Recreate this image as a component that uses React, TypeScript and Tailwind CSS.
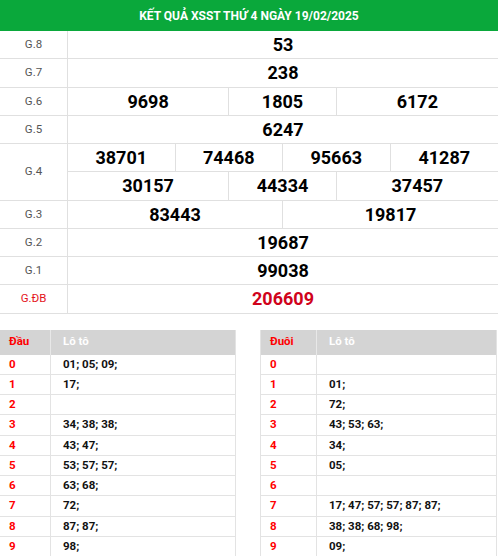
const prizes: { label: string; rows: { nums: string[]; spans: string[] }[]; red?: boolean }[] = [
  { label: 'G.8', rows: [{ nums: ['53'], spans: ['col-span-8'] }] },
  { label: 'G.7', rows: [{ nums: ['238'], spans: ['col-span-8'] }] },
  { label: 'G.6', rows: [{ nums: ['9698', '1805', '6172'], spans: ['col-span-3', 'col-span-2', 'col-span-3'] }] },
  { label: 'G.5', rows: [{ nums: ['6247'], spans: ['col-span-8'] }] },
  {
    label: 'G.4',
    rows: [
      { nums: ['38701', '74468', '95663', '41287'], spans: ['col-span-2', 'col-span-2', 'col-span-2', 'col-span-2'] },
      { nums: ['30157', '44334', '37457'], spans: ['col-span-3', 'col-span-2', 'col-span-3'] },
    ],
  },
  { label: 'G.3', rows: [{ nums: ['83443', '19817'], spans: ['col-span-4', 'col-span-4'] }] },
  { label: 'G.2', rows: [{ nums: ['19687'], spans: ['col-span-8'] }] },
  { label: 'G.1', rows: [{ nums: ['99038'], spans: ['col-span-8'] }] },
  { label: 'G.ĐB', rows: [{ nums: ['206609'], spans: ['col-span-8'] }], red: true },
];

const dau = ['01; 05; 09;', '17;', '', '34; 38; 38;', '43; 47;', '53; 57; 57;', '63; 68;', '72;', '87; 87;', '98;'];
const duoi = ['', '01;', '72;', '43; 53; 63;', '34;', '05;', '', '17; 47; 57; 57; 87; 87;', '38; 38; 68; 98;', '09;'];

function LotoTable({ title, items, colW }: { title: string; items: string[]; colW: string }) {
  return (
    <div className="w-[237px] border-x border-[#e3e3e3]">
      <div className="flex h-[25px] bg-[#d4d4d4] text-[11.5px] font-bold">
        <div className={`${colW} flex items-center pl-[9px] text-[#f00] border-r border-[#e8e8e8]`}>{title}</div>
        <div className="flex-1 flex items-center pl-[12px] text-white">Lô tô</div>
      </div>
      {items.map((v, i) => (
        <div key={i} className="flex h-[20.25px] border-b border-[#e3e3e3] text-[11.5px] font-bold">
          <div className={`${colW} flex items-center pl-[9px] text-[#f00] border-r border-[#e3e3e3]`}>{i}</div>
          <div className="flex-1 flex items-center pl-[12px] text-[#111]">{v}</div>
        </div>
      ))}
    </div>
  );
}

export default function App() {
  return (
    <div className="w-[498px] h-[556px] overflow-hidden bg-white font-['Roboto',sans-serif]">
      <div className="h-[31px] bg-[#0aa83b] flex items-center justify-center text-white text-[12px] font-bold">
        KẾT QUẢ XSST THỨ 4 NGÀY 19/02/2025
      </div>
      {prizes.map((p) => (
        <div key={p.label} className="flex">
          <div
            className={`w-[68px] shrink-0 flex items-center justify-center border-r border-b border-[#e0e0e0] text-[11.5px] ${
              p.red ? 'text-[#e4141b]' : 'text-[#555]'
            }`}
          >
            {p.label}
          </div>
          <div className="flex-1 flex flex-col">
            {p.rows.map((r, ri) => (
              <div key={ri} className="grid grid-cols-8 h-[28.25px] border-b border-[#e0e0e0]">
                {r.nums.map((n, ni) => (
                  <div
                    key={ni}
                    className={`${r.spans[ni]} flex items-center justify-center text-[18px] font-bold ${
                      p.red ? 'text-[#d0021b]' : 'text-black'
                    } ${ni < r.nums.length - 1 ? 'border-r border-[#e0e0e0]' : ''}`}
                  >
                    {n}
                  </div>
                ))}
              </div>
            ))}
          </div>
        </div>
      ))}
      <div className="flex gap-[24px] mt-[16px] -ml-px">
        <LotoTable title="Đầu" items={dau} colW="w-[51px]" />
        <LotoTable title="Đuôi" items={duoi} colW="w-[56px]" />
      </div>
    </div>
  );
}
